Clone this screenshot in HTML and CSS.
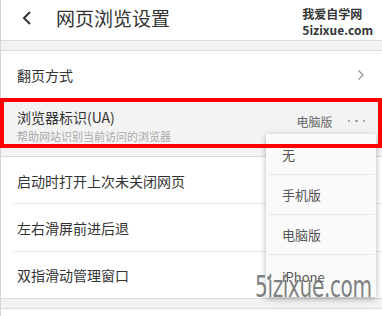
FILE: index.html
```html
<!DOCTYPE html>
<html lang="zh">
<head>
<meta charset="utf-8">
<link rel="stylesheet" href="styles.css">
</head>
<body>
<div class="page">
  <header class="header">
    <svg class="back" width="12" height="16" viewBox="0 0 12 16"><path d="M9 2 L3 8 L9 14" fill="none" stroke="#333" stroke-width="2"/></svg>
    <h1 class="title">网页浏览设置</h1>
    <div class="brand">
      <div>我爱自学网</div>
      <div>5izixue.com</div>
    </div>
  </header>
  <div class="band"></div>
  <div class="list">
    <div class="row row-first">
      <span class="label">翻页方式</span>
      <svg class="chev" width="8" height="12" viewBox="0 0 8 12"><path d="M1.5 1.5 L6 6 L1.5 10.5" fill="none" stroke="#999" stroke-width="1.4"/></svg>
    </div>
    <div class="row row-ua">
      <div class="ua-text">
        <span class="label">浏览器标识(UA)</span>
        <span class="sub">帮助网站识别当前访问的浏览器</span>
      </div>
      <span class="value">电脑版</span>
      <span class="dots"><i></i><i></i><i></i></span>
    </div>
    <div class="row row-a"><span class="label">启动时打开上次未关闭网页</span></div>
    <div class="row row-b"><span class="label">左右滑屏前进后退</span></div>
    <div class="row row-c"><span class="label">双指滑动管理窗口</span></div>
  </div>
  <div class="band band-bottom"></div>

  <div class="menu">
    <div class="item">无</div>
    <div class="item">手机版</div>
    <div class="item">电脑版</div>
    <div class="item">iPhone</div>
  </div>
  <div class="redbox"></div>
  <div class="wm-dot"></div>
  <div class="wm">5izixue.com</div>
</div>
</body>
</html>
```
FILE: styles.css
```css
* { box-sizing: border-box; }
html, body { margin: 0; padding: 0; background: #fff; }
body {
  font-family: "Noto Sans CJK SC", "Noto Sans", sans-serif;
  color: #333;
  width: 382px;
  height: 316px;
  overflow: hidden;
}
.page {
  position: relative;
  width: 382px;
  height: 316px;
  border-left: 1px solid #d6d6d6;
}
.header {
  height: 41px;
  display: flex;
  align-items: center;
  border-bottom: 1px solid #dcdcdc;
}
.back { margin-left: 20px; margin-top: -4px; }
.title {
  margin: -6px 0 0 23px;
  font-size: 19px;
  font-weight: normal;
  color: #333;
  line-height: 1;
  flex: 1;
}
.brand {
  margin-right: 9px;
  margin-top: 4px;
  font-size: 12px;
  font-weight: bold;
  line-height: 16px;
  color: #333;
}
.band {
  height: 10px;
  background: #f2f2f2;
  border-bottom: 1px solid #dcdcdc;
}
.list { display: flex; flex-direction: column; }
.row {
  display: flex;
  align-items: center;
  padding-left: 16px;
  font-size: 14px;
  position: relative;
}
.label { color: #333; line-height: 1; }
.row-first { height: 47px; justify-content: space-between; padding-right: 17px; }
.chev { margin-top: 1px; }
.row-ua {
  height: 59px;
  background: #f3f3f3;
  border-bottom: 1px solid #dcdcdc;
}
.ua-text {
  display: flex;
  flex-direction: column;
  gap: 7px;
  flex: 1;
  margin-top: -2px;
}
.sub { font-size: 11px; color: #aaa; line-height: 1; }
.value { font-size: 12px; color: #666; margin-top: -12px; }
.dots {
  display: flex;
  gap: 5px;
  margin: -12px 17px 0 15px;
}
.dots i {
  display: block;
  width: 2.5px;
  height: 2.5px;
  border-radius: 50%;
  background: #999;
}
.row-a, .row-b, .row-c { height: 47px; }
.row-a::after, .row-b::after {
  content: "";
  position: absolute;
  left: 12px;
  right: 0;
  bottom: 0;
  height: 1px;
  background: #e6e6e6;
}
.row-b { height: 48px; }
.row-c { height: 46px; }
.band-bottom {
  border-top: 1px solid #dcdcdc;
  height: 11px;
}
.menu {
  position: absolute;
  left: 265px;
  top: 134px;
  width: 110px;
  height: 163px;
  background: #fafafa;
  box-shadow: 0 2px 6px rgba(0,0,0,0.3);
  display: flex;
  flex-direction: column;
  padding: 1px 2px 0;
}
.item {
  height: 40px;
  display: flex;
  align-items: center;
  padding-left: 14px;
  font-size: 13px;
  color: #555;
  border-bottom: 1px solid #e8e8e8;
}
.item:last-child { border-bottom: none; padding-top: 2px; }
.redbox {
  position: absolute;
  left: -1px;
  top: 98px;
  width: 382px;
  height: 50px;
  border: 4px solid #ff0000;
}
.wm {
  position: absolute;
  left: 254px;
  top: 271px;
  font-family: "DejaVu Sans Condensed", "Liberation Sans Narrow", sans-serif;
  font-size: 31px;
  line-height: 1;
  color: rgba(105,105,105,0.85);
  transform: scaleX(0.72);
  transform-origin: left top;
  letter-spacing: -0.5px;
}
.wm-dot {
  position: absolute;
  left: 266px;
  top: 276px;
  width: 4px;
  height: 4px;
  border-radius: 50%;
  background: rgba(105,105,105,0.8);
}
```
